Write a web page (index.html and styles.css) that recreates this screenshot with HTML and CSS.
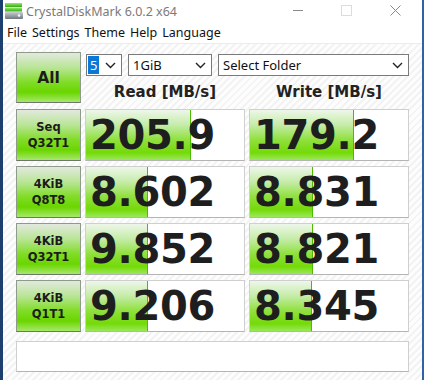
FILE: index.html
```html
<!DOCTYPE html>
<html lang="en">
<head>
    <meta charset="UTF-8">
    <title>CrystalDiskMark 6.0.2 x64</title>
    <link rel="stylesheet" href="styles.css">
</head>
<body>
    <div class="window">
        <div class="titlebar">
            <svg class="app-icon" width="20" height="18" viewBox="0 0 20 18">
                <defs>
                    <linearGradient id="g" x1="0" y1="0" x2="0" y2="1">
                        <stop offset="0" stop-color="#9be86a"/>
                        <stop offset="1" stop-color="#2fae12"/>
                    </linearGradient>
                    <linearGradient id="d" x1="0" y1="0" x2="0" y2="1">
                        <stop offset="0" stop-color="#c9ced3"/>
                        <stop offset="1" stop-color="#6f767d"/>
                    </linearGradient>
                </defs>
                <rect x="1" y="1" width="17" height="4" fill="url(#g)"/>
                <rect x="1" y="5.5" width="17" height="4" fill="url(#g)"/>
                <rect x="1" y="10" width="18" height="7" rx="1" fill="url(#d)"/>
                <circle cx="15" cy="13.5" r="1.3" fill="#f4f4f4"/>
            </svg>
            <span class="title">CrystalDiskMark 6.0.2 x64</span>
            <div class="controls">
                <svg width="46" height="22" viewBox="0 0 46 22"><line x1="18" y1="10.5" x2="28" y2="10.5" stroke="#8a8a8a"/></svg>
                <svg width="46" height="22" viewBox="0 0 46 22"><rect x="17.5" y="5.5" width="10" height="10" fill="none" stroke="#dcdcdc"/></svg>
                <svg width="46" height="22" viewBox="0 0 46 22"><path d="M17.5 5.5 L27.5 15.5 M27.5 5.5 L17.5 15.5" stroke="#8a8a8a"/></svg>
            </div>
        </div>

        <div class="menubar">
            <span>File</span>
            <span>Settings</span>
            <span>Theme</span>
            <span>Help</span>
            <span>Language</span>
        </div>

        <div class="client">
            <div class="grid">
                <div class="test all">All</div>
                <div class="options">
                    <div class="selects">
                        <div class="combo count"><span class="picked">5</span><svg class="chev" width="11" height="7" viewBox="0 0 11 7"><polyline points="1,1 5.5,5.5 10,1" fill="none" stroke="#222" stroke-width="1.4"/></svg></div>
                        <div class="combo size"><span>1GiB</span><svg class="chev" width="11" height="7" viewBox="0 0 11 7"><polyline points="1,1 5.5,5.5 10,1" fill="none" stroke="#222" stroke-width="1.4"/></svg></div>
                        <div class="combo folder"><span>Select Folder</span><svg class="chev" width="11" height="7" viewBox="0 0 11 7"><polyline points="1,1 5.5,5.5 10,1" fill="none" stroke="#222" stroke-width="1.4"/></svg></div>
                    </div>
                    <div class="headers">
                        <div>Read [MB/s]</div>
                        <div>Write [MB/s]</div>
                    </div>
                </div>

                <div class="test">Seq<br>Q32T1</div>
                <div class="result"><div class="bar" style="width: 104px"></div><span>205.9</span></div>
                <div class="result"><div class="bar" style="width: 103px"></div><span>179.2</span></div>

                <div class="test">4KiB<br>Q8T8</div>
                <div class="result"><div class="bar" style="width: 61px"></div><span>8.602</span></div>
                <div class="result"><div class="bar" style="width: 62px"></div><span>8.831</span></div>

                <div class="test">4KiB<br>Q32T1</div>
                <div class="result"><div class="bar" style="width: 61px"></div><span>9.852</span></div>
                <div class="result"><div class="bar" style="width: 62px"></div><span>8.821</span></div>

                <div class="test">4KiB<br>Q1T1</div>
                <div class="result"><div class="bar" style="width: 61px"></div><span>9.206</span></div>
                <div class="result"><div class="bar" style="width: 61px"></div><span>8.345</span></div>
            </div>
            <div class="status"></div>
        </div>
    </div>
</body>
</html>
```

FILE: styles.css
```css
body {
    margin: 0;
    background-color: #fff;
}
.window {
    width: 424px;
    height: 380px;
    box-sizing: border-box;
    border-left: 3px solid #1d3f70;
    border-right: 2px solid #2f62a6;
    background-color: #fff;
    overflow: hidden;
    font-family: "Noto Sans", sans-serif;
}
.titlebar {
    height: 22px;
    display: flex;
    align-items: center;
}
.app-icon {
    margin-left: 1px;
    margin-right: 2px;
}
.title {
    font-size: 12.5px;
    color: #7a7a7a;
}
.controls {
    margin-left: auto;
    display: flex;
    margin-right: 3px;
}
.controls svg {
    display: block;
    margin-left: 3px;
}
.menubar {
    height: 21px;
    display: flex;
    align-items: center;
    gap: 5px;
    padding-left: 4px;
    font-size: 12.5px;
    color: #111;
    border-bottom: 1px solid #ececec;
}
.client {
    height: 336px;
    padding: 8px 0 0 13px;
    box-sizing: border-box;
    background: repeating-linear-gradient(135deg, #fdfdfd 0, #fdfdfd 3px, #f3f3f3 3px, #f3f3f3 5px);
}
.grid {
    display: grid;
    grid-template-columns: 65px 160px 160px;
    grid-auto-rows: 52px;
    column-gap: 4px;
    row-gap: 5px;
    font-family: "DejaVu Sans", sans-serif;
    font-weight: bold;
    color: #222;
}
.test {
    box-sizing: border-box;
    border: 1px solid #8e9a8a;
    border-bottom-color: #6e766b;
    background: linear-gradient(to bottom, #e2e9de 0%, #b9e596 30%, #80dc25 60%, #6ad600 80%, #a6e86a 100%);
    display: flex;
    align-items: center;
    justify-content: center;
    text-align: center;
    font-size: 11.5px;
    line-height: 16px;
    color: #1c1c1c;
}
.test.all {
    height: 51px;
    font-size: 15.5px;
}
.options {
    grid-column: 2 / 4;
}
.selects {
    display: flex;
    gap: 6px;
    margin: 2px 0 0 1px;
}
.combo {
    height: 22px;
    box-sizing: border-box;
    border: 1px solid #7a7a7a;
    background-color: #fff;
    display: flex;
    align-items: center;
    padding: 0 5px 0 1px;
    font-family: "Noto Sans", sans-serif;
    font-weight: normal;
    font-size: 13px;
    color: #111;
}
.combo span {
    padding-left: 3px;
}
.combo .chev {
    margin-left: auto;
}
.count {
    width: 36px;
}
.count .picked {
    background-color: #0a78d7;
    color: #fff;
    padding: 0 2px;
    line-height: 18px;
}
.size {
    width: 84px;
}
.folder {
    flex: 1;
}
.headers {
    display: grid;
    grid-template-columns: 160px 160px;
    column-gap: 4px;
    margin-top: 5px;
    font-size: 15px;
    text-align: center;
    line-height: 22px;
}
.result {
    position: relative;
    box-sizing: border-box;
    border: 1px solid #cfcfcf;
    border-bottom-color: #b4b4b4;
    background-color: #fff;
    display: flex;
    align-items: center;
    overflow: hidden;
}
.bar {
    position: absolute;
    left: 0;
    top: 0;
    bottom: 0;
    border-right: 1px solid #4cbc00;
    background: linear-gradient(to bottom, #eef7ea 0%, #c5eca8 30%, #8fe03c 60%, #74da08 85%, #9ae85a 100%);
}
.result span {
    position: relative;
    padding-left: 4px;
    font-size: 40px;
    letter-spacing: -0.3px;
    line-height: 1;
    color: #1e1e1e;
}
.status {
    width: 393px;
    height: 31px;
    margin-top: 9px;
    box-sizing: border-box;
    border: 1px solid #cfcfcf;
    border-bottom-color: #b4b4b4;
    background-color: #fff;
}
```
